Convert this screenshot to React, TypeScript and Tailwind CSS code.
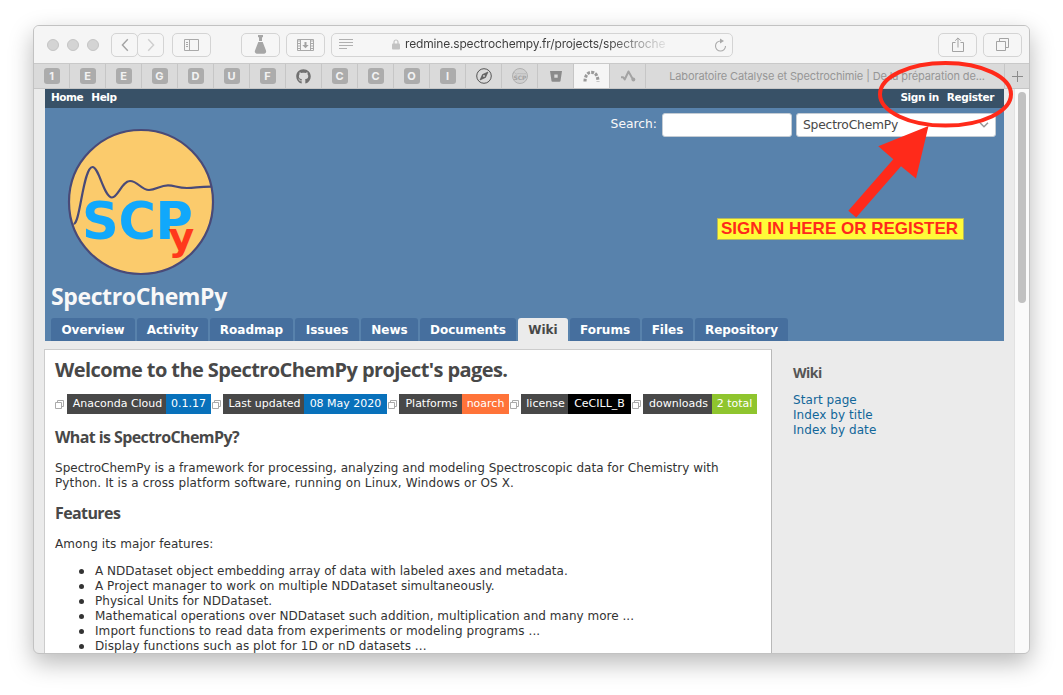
import React from "react";
import { FaGithub } from "react-icons/fa";

const verdana = "font-['DejaVu_Sans',Verdana,sans-serif]";
const system = "font-[Inter,'Liberation_Sans',sans-serif]";
const trebuchet = "font-['Open_Sans','Noto_Sans',sans-serif]";

function ToolButton({ className, children }: { className: string; children?: React.ReactNode }) {
  return (
    <div className={`flex h-6 shrink-0 items-center justify-center rounded-[5px] border border-[#d4d4d4] bg-[#f6f6f6] ${className}`}>
      {children}
    </div>
  );
}

function Toolbar() {
  return (
    <div className="flex h-[38px] shrink-0 items-center border-b border-[#c9c9c9] bg-[#f5f5f5] pl-[13px]">
      <div className="flex w-[64px] shrink-0 gap-2">
        <span className="size-3 rounded-full border border-[#c4c4c4] bg-[#d4d4d4]" />
        <span className="size-3 rounded-full border border-[#c4c4c4] bg-[#d4d4d4]" />
        <span className="size-3 rounded-full border border-[#c4c4c4] bg-[#d4d4d4]" />
      </div>
      <ToolButton className="w-[27px]">
        <svg width="8" height="14" viewBox="0 0 8 14" fill="none" stroke="#a3a3a3" strokeWidth="1.4"><path d="M6.8 1.2 1.4 7l5.4 5.8" /></svg>
      </ToolButton>
      <ToolButton className="-ml-px w-[27px]">
        <svg width="8" height="14" viewBox="0 0 8 14" fill="none" stroke="#cecece" strokeWidth="1.4"><path d="M1.2 1.2 6.6 7l-5.4 5.8" /></svg>
      </ToolButton>
      <ToolButton className="ml-2 w-[39px]">
        <svg width="15" height="12" viewBox="0 0 15 12" fill="none" stroke="#a9a9a9"><path d="M.5.5h14v11H.5zM5.5.5v11M2 3.5h2M2 5.5h2M2 7.500h2" /></svg>
      </ToolButton>
      <ToolButton className="ml-[30px] w-[39px]">
        <svg width="13" height="19" viewBox="0 0 13 19" fill="#a6a6a6"><path d="M4 0h5v2.200H8V6H5V2.200H4zM4.300 7h4.400l3.300 8.500c.7 2-.6 3.200-2 3.200H3c-1.400 0-2.700-1.200-2-3.200z" /></svg>
      </ToolButton>
      <ToolButton className="ml-1.5 w-[39px]">
        <svg width="17" height="12" viewBox="0 0 17 12" fill="none" stroke="#a9a9a9">
          <path d="M.5.5h16v11H.5zM3.500.5v11M13.500.5v11" />
          <path d="M1 2h2M1 4.500h2M1 7h2M1 9.500h2M14 2h2M14 4.500h2M14 7h2M14 9.500h2" strokeWidth="1" />
          <path d="M7.500 3h2v3h2.200L8.500 9.300 5.300 6h2.200z" fill="#a3a3a3" stroke="none" />
        </svg>
      </ToolButton>
      <div className="ml-1.5 flex h-6 w-[402px] shrink-0 items-center rounded-[5px] border border-[#d4d4d4] bg-[#f6f6f6] pl-[7px] pr-[5px]">
        <svg width="15" height="11" viewBox="0 0 15 11" stroke="#b0b0b0"><path d="M0 .5h14M0 3.500h14M0 6.500h14M0 9.500h8" /></svg>
        <svg className="ml-[38px]" width="8" height="11" viewBox="0 0 8 11"><path d="M2 5V3a2 2 0 0 1 4 0v2" fill="none" stroke="#c2c2c2" strokeWidth="1.2" /><rect y="4.500" width="8" height="6" rx="1" fill="#c2c2c2" /></svg>
        <span className={`ml-[5px] w-[268px] overflow-hidden whitespace-nowrap bg-linear-to-r from-[#3c3c3c] from-75% to-transparent bg-clip-text pb-px text-[12px] leading-4 tracking-[-0.17px] text-transparent ${system}`}>
          redmine.spectrochempy.fr/projects/spectroche
        </span>
        <svg className="ml-auto" width="13" height="14" viewBox="0 0 13 14" fill="none" stroke="#aaa" strokeWidth="1.100"><path d="M6.500 3A5 5 0 1 0 11.500 8" /><path d="m6 .5 4 2.500-4 2.500z" fill="#aaa" stroke="none" /></svg>
      </div>
      <ToolButton className="ml-[205px] w-[39px]">
        <svg width="12" height="16" viewBox="0 0 12 16" fill="none" stroke="#a3a3a3"><path d="M3.500 5.500h-3v9h11v-9h-3M6 10.500V1M3.200 3.700 6 .9l2.800 2.800" /></svg>
      </ToolButton>
      <ToolButton className="ml-1.5 w-[39px]">
        <svg width="13" height="13" viewBox="0 0 13 13" fill="none" stroke="#a3a3a3"><path d="M.5 3.500h9v9h-9zM3.500 3V.5h9v9H10" /></svg>
      </ToolButton>
    </div>
  );
}

function Letter({ children }: { children: string }) {
  return <span className={`flex size-4 items-center justify-center rounded-[3px] bg-[#acacac] text-[11px] font-bold leading-4 text-[#f2f2f2] ${system}`}>{children}</span>;
}

function PinnedTab({ active, children }: { active?: boolean; children: React.ReactNode }) {
  return <div className={`flex w-9 shrink-0 items-center justify-center border-r border-[#c6c6c6] ${active ? "bg-[#f5f5f5]" : ""}`}>{children}</div>;
}

function TabBar() {
  return (
    <div className="flex h-[25px] shrink-0 border-b border-[#c6c6c6] bg-[#dadada]">
      <div className="flex">
        {["1", "E", "E", "G", "D", "U", "F"].map((l, i) => <PinnedTab key={i}><Letter>{l}</Letter></PinnedTab>)}
        <PinnedTab><FaGithub size={15} color="#707070" /></PinnedTab>
        {["C", "C", "O", "I"].map((l, i) => <PinnedTab key={i}><Letter>{l}</Letter></PinnedTab>)}
        <PinnedTab>
          <svg width="16" height="16" viewBox="0 0 16 16" fill="none" stroke="#555"><circle cx="8" cy="8" r="7.300" /><path d="m12 4-2.500 5.500L4 12l2.500-5.500z" fill="#666" strokeWidth=".6" /><circle cx="8" cy="8" r=".9" fill="#dadada" stroke="none" /></svg>
        </PinnedTab>
        <PinnedTab>
          <svg width="16" height="16" viewBox="0 0 16 16"><circle cx="8" cy="8" r="7.500" fill="#d0d0d0" stroke="#b0b0b0" /><path d="M1 6c2-4 2 1 4 0s2 0 9-.3" fill="none" stroke="#b0b0b0" strokeWidth=".7" /><text x="1.400" y="11.500" fontFamily="DejaVu Sans" fontWeight="bold" fontSize="6" fill="#a4a4a4">SCP</text></svg>
        </PinnedTab>
        <PinnedTab>
          <svg width="12" height="12" viewBox="0 0 12 12"><path d="M0 1h12l-1.500 10a1 1 0 0 1-1 .8h-7a1 1 0 0 1-1-.8z" fill="#8b8b8b" /><path d="M4.300 4.600h3.400v3.200H4.300z" fill="#dadada" /></svg>
        </PinnedTab>
        <PinnedTab active>
          <svg width="17" height="12" viewBox="0 0 17 12" fill="none" stroke="#999" strokeWidth="3.100"><path d="M2 11.600C2 6.500 4 2.400 8.500 2.400S15 6.500 15 11.600" strokeDasharray="2.900 1.200" /></svg>
        </PinnedTab>
        <PinnedTab>
          <svg width="16" height="12" viewBox="0 0 16 12" fill="none" stroke="#a3a3a3" strokeWidth="2"><path d="M1 7.300h2.200l1.500 2.200L8.500 1.500 13 9.500" strokeLinejoin="round" /><circle cx="13.400" cy="9.500" r="1.900" fill="#a3a3a3" stroke="none" /></svg>
        </PinnedTab>
      </div>
      <div className={`flex w-[359px] shrink-0 items-center justify-center whitespace-nowrap border-r border-[#c6c6c6] pl-1 text-[11px] tracking-[-0.12px] text-[#969696] ${system}`}>
        Laboratoire Catalyse et Spectrochimie | De la préparation de...
      </div>
      <div className="flex flex-1 items-center justify-center"><svg width="11" height="11" viewBox="0 0 11 11" stroke="#8b8b8b"><path d="M5.500 0v11M0 5.500h11" /></svg></div>
    </div>
  );
}

const projectTabs = [
  ["Overview", "w-[84px]"], ["Activity", "w-[71px]"], ["Roadmap", "w-[83px]"], ["Issues", "w-[64px]"], ["News", "w-[57px]"],
  ["Documents", "w-[96px]"], ["Wiki", "w-[50px]"], ["Forums", "w-[70px]"], ["Files", "w-[51px]"], ["Repository", "w-[93px]"],
];

function Logo() {
  return (
    <svg className="ml-[22px] mt-[20px]" width="148" height="148" viewBox="67 128 148 148">
      <circle cx="141" cy="202" r="72" fill="#fbcb6c" stroke="#494a78" strokeWidth="2.200" />
      <path d="M73.500 223.500C80 226 83 167 92.500 167C99 167 104 197.500 112 197.500C118 197.500 122 181 130 181C138 181 141 190 149 190C156 190 160 185.300 168 185.300C175 185.300 177 188 187 188C196 188 198 186.500 212 186.600" fill="none" stroke="#494a78" strokeWidth="2.200" />
      <text x="82" y="238.500" fontFamily="DejaVu Sans" fontWeight="bold" fontSize="51" fill="#11a8fb" textLength="111">SCP</text>
      <text x="168.500" y="249.500" fontFamily="DejaVu Sans" fontWeight="bold" fontSize="39.500" fill="#ff391b">y</text>
    </svg>
  );
}

function Header() {
  return (
    <header className={`w-[959px] ${verdana}`}>
      <div className="flex h-[19px] gap-2 bg-[#385167] pl-1.5 pr-[10px] text-[10.5px] font-bold leading-[17px] text-white">
        <span className="tracking-[-0.45px]">Home</span>
        <span className="tracking-[-0.4px]">Help</span>
        <span className="ml-auto tracking-[-0.35px]">Sign in</span>
        <span className="tracking-[-0.34px]">Register</span>
      </div>
      <div className="flex h-[233px] flex-col bg-[#5882ac]">
        <div className="flex min-h-0 flex-1 justify-between">
          <div className="flex flex-col">
            <Logo />
            <h1 className={`ml-1.5 mt-[4px] whitespace-nowrap text-[23px] font-bold leading-8 tracking-[-0.38px] text-[#f8f8f8] ${trebuchet}`}>SpectroChemPy</h1>
          </div>
          <div className="mr-2 mt-[5px] flex h-6 items-center text-[12px] text-[#f8f8f8]">
            <span className="mr-[5px] pb-[2px] text-[12.3px]">Search:</span>
            <span className="mr-[4px] h-6 w-[130px] rounded-[3px] border border-[#c4ccd4] bg-white" />
            <span className="flex h-6 w-[200px] items-center justify-between rounded-[3px] border border-[#c4ccd4] bg-white pl-[6px] pr-[6px] text-[12.3px] tracking-[-0.2px] text-[#484848]">
              SpectroChemPy
              <svg width="10" height="6" viewBox="0 0 10 6" fill="none" stroke="#999" strokeWidth="1.500"><path d="m1 .7 4 4 4-4" /></svg>
            </span>
          </div>
        </div>
        <nav className="flex h-[23px] shrink-0 gap-[2px] pl-1.5 text-[12px] font-bold leading-[24px]">
          {projectTabs.map(([name, width]) => (
            <span key={name} className={`flex shrink-0 justify-center whitespace-nowrap rounded-t-[3px] ${width} ${name === "Wiki" ? "bg-[#ebebeb] text-[#484848]" : "bg-[#466f9e] text-white"}`}>{name}</span>
          ))}
        </nav>
      </div>
    </header>
  );
}

function ExternalIcon() {
  return <svg className="shrink-0" width="9" height="9" viewBox="0 0 9 9" fill="none" stroke="#aaa"><path d="M.5 2.500h6v6h-6zM2.500 2V.5h6v6H7" /></svg>;
}

const badges = [
  ["Anaconda Cloud", "w-[99px]", "0.1.17", "w-[45px] bg-[#0871bb]"],
  ["Last updated", "w-[81px]", "08 May 2020", "w-[83px] bg-[#0871bb]"],
  ["Platforms", "w-[63px]", "noarch", "w-[47px] bg-[#ff7339]"],
  ["license", "w-[47px]", "CeCILL_B", "w-[63px] bg-black"],
  ["downloads", "w-[69px]", "2 total", "w-[45px] bg-[#8fc52e]"],
];

const features = [
  ["A NDDataset object embedding array of data with labeled axes and metadata.", "tracking-[0.01px]"],
  ["A Project manager to work on multiple NDDataset simultaneously.", "tracking-[0.04px]"],
  ["Physical Units for NDDataset.", "tracking-[0.02px]"],
  ["Mathematical operations over NDDataset such addition, multiplication and many more ...", "tracking-[0.02px]"],
  ["Import functions to read data from experiments or modeling programs ...", "tracking-[0.08px]"],
  ["Display functions such as plot for 1D or nD datasets ...", "tracking-[0.065px]"],
];

function Content() {
  return (
    <main className="w-[728px] shrink-0 overflow-hidden border border-b-0 border-[#ccc] border-r-[#b8b8b8] bg-white pl-[10px] text-[12px] leading-[15px] text-[#333]">
      <h2 className={`mt-[6px] h-[29px] whitespace-nowrap text-[20px] font-bold leading-[28px] tracking-[-0.59px] text-[#484848] ${trebuchet}`}>Welcome to the SpectroChemPy project's pages.</h2>
      <div className="mt-[9px] flex h-5 gap-px text-[11px] leading-5 text-white">
        {badges.map(([label, labelWidth, value, valueClass], i) => (
          <div key={label} className="flex shrink-0 items-center">
            <ExternalIcon />
            <span className={`flex justify-center whitespace-nowrap bg-[#484848] pl-0.5 ${i === 0 ? "ml-[3px]" : "ml-[2px]"} ${labelWidth}`}>{label}</span>
            <span className={`flex justify-center whitespace-nowrap ${valueClass}`}>{value}</span>
          </div>
        ))}
      </div>
      <h3 className={`mt-[13px] h-5 whitespace-nowrap text-[16px] font-bold leading-5 tracking-[-0.6px] text-[#484848] ${trebuchet}`}>What is SpectroChemPy?</h3>
      <p className="mt-[14px] whitespace-nowrap">
        <span className="block tracking-[0.02px]">SpectroChemPy is a framework for processing, analyzing and modeling Spectroscopic data for Chemistry with</span>
        <span className="block tracking-[0.12px]">Python. It is a cross platform software, running on Linux, Windows or OS X.</span>
      </p>
      <h3 className={`mt-3 h-5 text-[16px] font-bold leading-5 tracking-[-0.6px] text-[#484848] ${trebuchet}`}>Features</h3>
      <p className="mt-[14px] tracking-[0.08px]">Among its major features:</p>
      <ul className="mt-3 pl-6">
        {features.map(([text, tracking]) => (
          <li key={text} className={`flex items-center whitespace-nowrap ${tracking}`}><span className="mr-[11px] size-[5px] rounded-full bg-[#333]" />{text}</li>
        ))}
      </ul>
    </main>
  );
}

function Annotation() {
  return (
    <>
      <svg className="pointer-events-none absolute left-[840px] top-[55px]" width="180" height="170" viewBox="840 55 180 170">
        <ellipse cx="945.500" cy="94.300" rx="65.500" ry="31.300" fill="none" stroke="#ff2a1a" strokeWidth="4" />
        <path d="M928.500 126 878.300 146.300 893.300 159.300 848.300 210.800 856.200 217.500 901 166.200 916 178.500z" fill="#ff2a1a" />
      </svg>
      <div className="absolute left-[717px] top-[218px] flex h-[22px] w-[247px] items-center whitespace-nowrap border border-[#b5b560] bg-[#fffb38] pl-[3px] font-['Liberation_Sans',Arial,sans-serif] text-[17px] font-bold text-[#ff2a1a]">SIGN IN HERE OR REGISTER</div>
    </>
  );
}

export default function App() {
  return (
    <div className="relative h-[695px] w-[1063px] overflow-hidden bg-white pl-[33px] pt-[25px]">
      <div className="flex h-[629px] w-[997px] flex-col overflow-hidden rounded-md border border-[#c2c2c2] bg-[#ebebeb] shadow-[0_9px_25px_rgba(0,0,0,0.28)]">
        <Toolbar />
        <TabBar />
        <div className="flex min-h-0 flex-1">
          <div className="flex w-[980px] shrink-0 flex-col">
            <div className="pl-[11px]"><Header /></div>
            <div className={`ml-[10px] mt-2 flex min-h-0 flex-1 ${verdana}`}>
              <Content />
              <aside className="ml-[21px] mt-[14px] text-[12px] leading-[15px] tracking-[0.07px] text-[#116699]">
                <h3 className={`mb-[10px] h-5 text-[14px] font-bold leading-5 tracking-[-0.5px] text-[#555] ${trebuchet}`}>Wiki</h3>
                <p>Start page</p><p>Index by title</p><p>Index by date</p>
              </aside>
            </div>
          </div>
          <div className="flex flex-1 justify-center border-l border-[#e2e2e2] bg-[#fafafa] pt-[3px]"><span className="h-[211px] w-2 rounded-full bg-[#c1c1c1]" /></div>
        </div>
      </div>
      <Annotation />
    </div>
  );
}
